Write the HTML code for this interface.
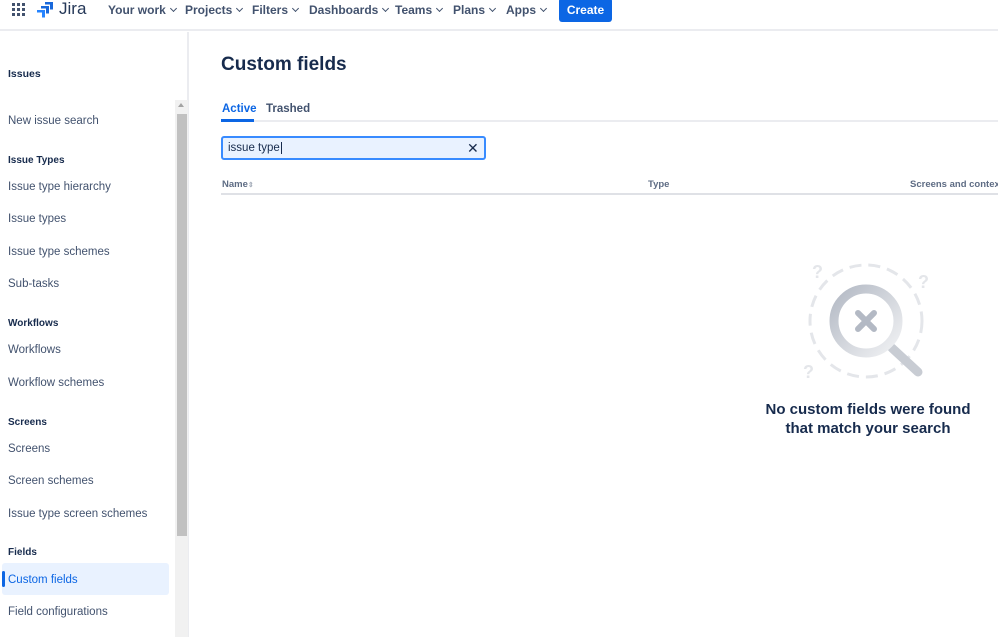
<!DOCTYPE html>
<html><head><meta charset="utf-8"><style>
*{box-sizing:border-box;margin:0;padding:0}
body{width:998px;height:637px;overflow:hidden;background:#fff;font-family:"Liberation Sans",sans-serif;color:#172b4d;position:relative}
.top{position:absolute;left:0;top:0;width:998px;height:31px;border-bottom:2px solid #ebecf0;background:#fff}
.nav{position:absolute;top:3px;font-size:12px;color:#42526e;font-weight:bold}
.nav span{position:absolute;white-space:nowrap}
.car{display:inline-block;width:5px;height:5px;border-right:1.5px solid #42526e;border-bottom:1.5px solid #42526e;transform:rotate(45deg);margin-left:5px;position:relative;top:-3px}
.create{position:absolute;left:559px;top:-2px;width:53px;height:24px;background:#0c66e4;color:#fff;border-radius:3px;font-size:12px;font-weight:bold;text-align:center;line-height:24px}
.side{position:absolute;left:0;top:32px;width:189px;height:605px;border-right:2px solid #ebecf0}
.si{position:absolute;left:8px;font-size:11.5px;color:#42526e;white-space:nowrap}
.sh{position:absolute;left:8px;font-size:10px;font-weight:bold;color:#172b4d}
.sb{position:absolute;left:175px;top:100px;width:13px;height:537px;background:#f1f1f1}
.thumb{position:absolute;left:177px;top:114px;width:10px;height:422px;background:#c1c1c1}
.sel{position:absolute;left:2px;top:563px;width:167px;height:32px;background:#e9f2ff;border-radius:3px}
.selbar{position:absolute;left:2px;top:571px;width:3px;height:16px;background:#0c66e4;border-radius:2px}
</style></head><body>
<div class="top">
<svg style="position:absolute;left:12px;top:3px" width="14" height="14" viewBox="0 0 14 14" fill="#42526e">
<rect x="0" y="0" width="3" height="3"/><rect x="5" y="0" width="3" height="3"/><rect x="10" y="0" width="3" height="3"/>
<rect x="0" y="5" width="3" height="3"/><rect x="5" y="5" width="3" height="3"/><rect x="10" y="5" width="3" height="3"/>
<rect x="0" y="10" width="3" height="3"/><rect x="5" y="10" width="3" height="3"/><rect x="10" y="10" width="3" height="3"/></svg>
<svg style="position:absolute;left:36px;top:1px" width="18" height="17" viewBox="0 0 18 17">
<path d="M17 1H9l0 2.5h5v5h3z" fill="#1868db"/><path d="M13 5H5v2.5h5v5h3z" fill="#1868db"/><path d="M9 9H1v2.5h5v5h3z" fill="#2684ff"/></svg>
<div style="position:absolute;left:59px;top:-1px;font-size:17px;color:#253858">Jira</div>
<div class="nav">
<span style="left:108px">Your work<i class="car"></i></span>
<span style="left:185px">Projects<i class="car"></i></span>
<span style="left:252px">Filters<i class="car"></i></span>
<span style="left:309px">Dashboards<i class="car"></i></span>
<span style="left:395px">Teams<i class="car"></i></span>
<span style="left:453px">Plans<i class="car"></i></span>
<span style="left:506px">Apps<i class="car"></i></span>
</div>
<div class="create">Create</div>
</div>
<div class="side">
<div class="sh" style="top:36px;font-size:10.5px">Issues</div>
</div>
<div class="si" style="top:115px">New issue search</div>
<div class="sh" style="top:155px">Issue Types</div>
<div class="si" style="top:181px">Issue type hierarchy</div>
<div class="si" style="top:213px">Issue types</div>
<div class="si" style="top:246px">Issue type schemes</div>
<div class="si" style="top:278px">Sub-tasks</div>
<div class="sh" style="top:318px">Workflows</div>
<div class="si" style="top:344px">Workflows</div>
<div class="si" style="top:377px">Workflow schemes</div>
<div class="sh" style="top:417px">Screens</div>
<div class="si" style="top:443px">Screens</div>
<div class="si" style="top:475px">Screen schemes</div>
<div class="si" style="top:508px">Issue type screen schemes</div>
<div class="sh" style="top:547px">Fields</div>
<div class="sel"></div><div class="selbar"></div>
<div class="si" style="top:574px;color:#0c66e4">Custom fields</div>
<div class="si" style="top:606px">Field configurations</div>
<div class="sb"></div><div class="thumb"></div>
<div style="position:absolute;left:178px;top:103px;width:0;height:0;border-left:3.5px solid transparent;border-right:3.5px solid transparent;border-bottom:4px solid #a3a3a3"></div>

<div style="position:absolute;left:221px;top:54px;font-size:19px;font-weight:bold;color:#172b4d">Custom fields</div>
<div style="position:absolute;left:222px;top:103px;font-size:11.5px;font-weight:bold;color:#0c66e4">Active</div>
<div style="position:absolute;left:266px;top:103px;font-size:11.5px;font-weight:bold;color:#42526e">Trashed</div>
<div style="position:absolute;left:221px;top:120px;width:777px;height:2px;background:#ebecf0"></div>
<div style="position:absolute;left:221px;top:119px;width:33px;height:3px;background:#0c66e4"></div>
<div style="position:absolute;left:221px;top:136px;width:265px;height:24px;border:2px solid #388bff;border-radius:3px;background:#e9f2ff"></div>
<div style="position:absolute;left:228px;top:142px;font-size:11.5px;color:#172b4d">issue type<span style="border-left:1px solid #172b4d;margin-left:1px"></span></div>
<div style="position:absolute;left:467px;top:140px;font-size:14px;color:#172b4d">✕</div>
<div style="position:absolute;left:222px;top:179px;font-size:9.5px;font-weight:bold;color:#5e6c84">Name<span style="font-size:7px;color:#a5adba">⇕</span></div>
<div style="position:absolute;left:648px;top:179px;font-size:9.5px;font-weight:bold;color:#5e6c84">Type</div>
<div style="position:absolute;left:910px;top:179px;font-size:9.5px;font-weight:bold;color:#5e6c84;white-space:nowrap">Screens and contexts</div>
<div style="position:absolute;left:221px;top:193px;width:777px;height:2px;background:#dfe1e6"></div>

<svg style="position:absolute;left:800px;top:258px" width="136" height="125" viewBox="0 0 136 125">
<defs><linearGradient id="g" x1="0" y1="0" x2="1" y2="1"><stop offset="0" stop-color="#b3b9c4"/><stop offset="1" stop-color="#f1f2f4"/></linearGradient></defs>
<circle cx="66" cy="63" r="56" fill="none" stroke="#e4e6ea" stroke-width="3" stroke-dasharray="12 7"/>
<text x="12" y="20" font-size="18" font-weight="bold" fill="#e4e6ea" font-family="Liberation Sans">?</text>
<text x="118" y="30" font-size="18" font-weight="bold" fill="#e4e6ea" font-family="Liberation Sans">?</text>
<text x="3" y="120" font-size="18" font-weight="bold" fill="#e4e6ea" font-family="Liberation Sans">?</text>
<line x1="92" y1="90" x2="118" y2="114" stroke="#c8ccd3" stroke-width="9" stroke-linecap="round"/>
<circle cx="66" cy="63" r="32" fill="#fff" stroke="url(#g)" stroke-width="9"/>
<path d="M58 55l16 16M74 55L58 71" stroke="#b3b9c4" stroke-width="6" stroke-linecap="round"/>
</svg>
<div style="position:absolute;left:738px;top:400px;width:260px;text-align:center;font-size:15px;font-weight:bold;line-height:19px;color:#172b4d">No custom fields were found<br>that match your search</div>
</body></html>
